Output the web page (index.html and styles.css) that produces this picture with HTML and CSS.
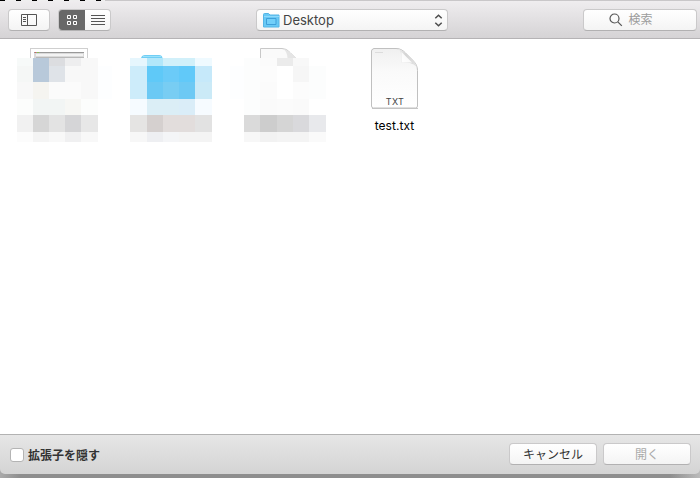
FILE: index.html
```html
<!DOCTYPE html>
<html lang="ja">
<head>
<meta charset="utf-8">
<title>Desktop</title>
<link rel="stylesheet" href="styles.css">
</head>
<body>
<div class="dialog">
  <div class="edge"></div>
  <header class="toolbar">
    <button class="btn sidebar-btn" aria-label="Sidebar"><svg width="16" height="12" viewBox="0 0 16 12" fill="none" stroke="#555"><path d="M.5 .5h15v11H.5zM6.500 .5v11M2 3.500h3M2 5.500h3M2 7.500h3"/></svg></button>
    <div class="views">
      <span class="view active"><svg width="10" height="10" viewBox="0 0 10 10" fill="none" stroke="#fff"><path d="M.5 .5h3v3h-3zM6.500 .5h3v3h-3zM.5 6.500h3v3h-3zM6.500 6.500h3v3h-3z"/></svg></span>
      <span class="view"><svg width="14" height="10" viewBox="0 0 14 10" stroke="#555"><path d="M0 .5h14M0 3.500h14M0 6.500h14M0 9.500h14"/></svg></span>
    </div>
    <div class="btn location">
      <svg width="17" height="15" viewBox="0 0 17 15"><path d="M.5 1.500Q.5.5 1.500.5h4l1.500 1.500h9v12H.5z" fill="#68c9f5" stroke="#55b4e5"/><path d="M1 3.500h15" stroke="#8fd8fb"/><path d="M3.500 5.500h9.500v6h-9.500z" fill="#72cff9" stroke="#3f9fd9"/></svg>
      <span class="name">Desktop</span>
      <svg width="9" height="13" viewBox="0 0 9 13" fill="none" stroke="#4c4c4c" stroke-width="1.500"><path d="M1.300 4.300 4.500 1.300l3.200 3M1.300 8.700l3.200 3 3.200-3"/></svg>
    </div>
    <div class="btn search"><svg width="14" height="14" viewBox="0 0 14 14" fill="none" stroke="#555" stroke-width="1.200"><circle cx="5.500" cy="5.500" r="4.500"/><path d="m8.800 8.800 4 4"/></svg><span>検索</span></div>
  </header>
  <main class="files">
    <div class="file">
      <svg width="114" height="103" viewBox="0 39 114 103" shape-rendering="crispEdges">
        <path d="M30.500 59V48.500h57V59" fill="#fff" stroke="#cfcfcf"/><path d="M34 52h50v7H34z" fill="#dadada"/><path d="M34 52.500h50" stroke="#999"/><path d="M35 52.500h1" stroke="#df6257"/><path d="M37 52.500h2" stroke="#8bbc55"/><path d="M36 55h47" stroke="#f3f3f3" stroke-width="2"/><path d="M36 57.500h48" stroke="#b8b8b8"/>
        <g><path fill="#f7faf9" d="M17 58h16v8H17z"/><path fill="#b8c9da" d="M33 58h16v24H33z"/><path fill="#dcdde0" d="M49 58h16v8H49z"/><path fill="#eeeeef" d="M65 58h16v8H65z"/><path fill="#f8f8f8" d="M81 58h17v24H81zM65 66h16v16H65z"/><path fill="#f5f7f6" d="M17 66h16v16H17z"/><path fill="#dfe3e8" d="M49 66h16v16H49z"/><path fill="#fdfeff" d="M98 66h14v33H98z"/>
        <path fill="#f8f8f8" d="M17 82h16v17H17zM81 82h17v17H81z"/><path fill="#f5f4f0" d="M33 82h16v17H33z"/><path fill="#fbfbfb" d="M49 82h32v17H49z"/><path fill="#fcfdfc" d="M17 99h16v16H17zM81 99h17v16H81z"/><path fill="#f2f5f4" d="M33 99h32v16H33z"/><path fill="#f7f7f4" d="M65 99h16v16H65z"/>
        <path fill="#f1f1f1" d="M17 115h16v17H17z"/><path fill="#d6d6d6" d="M33 115h16v17H33z"/><path fill="#e3e3e3" d="M49 115h16v17H49z"/><path fill="#d5d5d7" d="M65 115h16v17H65z"/><path fill="#e7e7e7" d="M81 115h17v17H81z"/><path fill="#fcfcfc" d="M17 132h16v10H17z"/><path fill="#f4f4f4" d="M33 132h16v10H33z"/><path fill="#f8f8f8" d="M49 132h16v10H49zM81 132h17v10H81z"/><path fill="#f0f0f1" d="M65 132h16v10H65z"/></g>
      </svg>
    </div>
    <div class="file">
      <svg width="114" height="103" viewBox="114 39 114 103">
        <path d="M141 58q1-3 4-3h14q3 0 3.500 3z" fill="#70cef5"/><path d="M143 56.500h18" stroke="#9be2fb"/>
        <g shape-rendering="crispEdges"><path fill="#e6f6fd" d="M130 58h17v8h-17z"/><path fill="#b2e7fa" d="M147 58h16v8h-16z"/><path fill="#d1f0fa" d="M163 58h32v8h-32z"/><path fill="#effaff" d="M195 58h17v8h-17z"/><path fill="#cdecfa" d="M130 66h17v33h-17z"/><path fill="#5fc9f8" d="M147 66h16v16h-16z"/><path fill="#6bcbf8" d="M163 66h16v16h-16z"/><path fill="#61c9f9" d="M179 66h16v16h-16z"/><path fill="#c6e9fa" d="M195 66h17v16h-17z"/><path fill="#6bc9f4" d="M147 82h16v17h-16z"/><path fill="#78cdf3" d="M163 82h16v17h-16z"/><path fill="#6dc9f4" d="M179 82h16v17h-16z"/><path fill="#cbeaf7" d="M195 82h17v17h-17z"/>
        <path fill="#f6fbff" d="M130 99h17v16h-17zM195 99h17v16h-17z"/><path fill="#dbeef6" d="M147 99h32v16h-32z"/><path fill="#daedf8" d="M179 99h16v16h-16z"/><path fill="#e5e4e3" d="M130 115h17v17h-17z"/><path fill="#d5d0cf" d="M147 115h16v17h-16z"/><path fill="#e2dddc" d="M163 115h32v17h-32z"/><path fill="#e2e2e2" d="M195 115h17v17h-17z"/><path fill="#f7f7f7" d="M130 132h17v10h-17z"/><path fill="#eeeff2" d="M147 132h16v10h-16z"/><path fill="#f4f5f7" d="M163 132h16v10h-16z"/><path fill="#f4f4f4" d="M179 132h33v10h-33z"/></g>
      </svg>
    </div>
    <div class="file">
      <svg width="114" height="103" viewBox="228 39 114 103">
        <path d="M260.500 59V48.500H282q5 0 8 4l6 6" fill="#fafafa" stroke="#c8c8c8"/><path d="M283 49q4 2 4.500 9h8l-6-6q-3-3-6.500-3z" fill="#e5e5e5"/>
        <g shape-rendering="crispEdges"><path fill="#fdfeff" d="M230 66h14v33h-14z"/><path fill="#fcfdfd" d="M244 58h16v57h-16zM309 66h17v33h-17z"/><path fill="#fbfbfb" d="M260 58h17v8h-17zM260 82h17v17h-17zM277 99h16v16h-16z"/><path fill="#ebebeb" d="M277 58h16v8h-16z"/><path fill="#f8f8f8" d="M293 58h16v8h-16z"/><path fill="#fcfcfc" d="M260 66h17v16h-17zM293 82h16v17h-16z"/><path fill="#fff" d="M277 66h16v33h-16z"/><path fill="#f6f6f6" d="M293 66h16v16h-16z"/><path fill="#fafafa" d="M260 99h17v16h-17zM293 99h16v16h-16z"/>
        <path fill="#dadada" d="M244 115h16v17h-16z"/><path fill="#cdcdcd" d="M260 115h17v17h-17z"/><path fill="#d5d5d5" d="M277 115h16v17h-16z"/><path fill="#d9d9dc" d="M293 115h16v17h-16z"/><path fill="#e8e9ec" d="M309 115h17v17h-17z"/><path fill="#f7f7f7" d="M244 132h16v10h-16z"/><path fill="#f2f2f2" d="M260 132h17v10h-17z"/><path fill="#f4f4f4" d="M277 132h32v10h-32z"/><path fill="#fafafa" d="M309 132h17v10h-17z"/></g>
      </svg>
    </div>
    <div class="file text-file">
      <svg width="50" height="64" viewBox="0 0 50 64">
        <defs><linearGradient id="page" x2="0" y2="1"><stop stop-color="#f0f0f0"/><stop offset=".4" stop-color="#fafafa"/><stop offset="1" stop-color="#fff"/></linearGradient><linearGradient id="fold" x1="0" y1="1" x2="1" y2="0"><stop stop-color="#fff"/><stop offset="1" stop-color="#f4f4f4"/></linearGradient><linearGradient id="shade" x2="1"><stop stop-color="#f0f0f0"/><stop offset=".4" stop-color="#d4d4d4"/><stop offset="1" stop-color="#e4e4e4"/></linearGradient></defs>
        <path d="M2 61.500h46" stroke="#000" stroke-opacity=".22"/>
        <path d="M3.500 1.500H26c4.500 0 7 2 9.500 4.500l7 7c3.500 3.500 5 6.500 5 10.500v35.500q0 2-2 2h-42q-2 0-2-2v-55q0-2 2-2z" fill="url(#page)" stroke="#c0c0c0"/>
        <path d="M28 2c3.500 2.500 3.500 7 3 13.500 7-.5 13 .5 16 5-.5-3-2-5-5-8l-7-7c-2-2-4-3-7-3.500z" fill="url(#shade)"/>
        <path d="M31.500 5V15.500h10.500z" fill="url(#fold)"/><path d="M5 5.500h8" stroke="#dcdcdc"/>
        <text class="badge-text" x="25" y="57.500" text-anchor="middle">TXT</text>
      </svg>
      <span class="caption">test.txt</span>
    </div>
  </main>
  <footer class="actions">
    <label class="option"><span class="checkbox"></span><span class="option-text">拡張子を隠す</span></label>
    <button class="btn action">キャンセル</button>
    <button class="btn action disabled">開く</button>
  </footer>
</div>
</body>
</html>
```
FILE: styles.css
```css
* { box-sizing: border-box; }
body { margin: 0; width: 700px; height: 478px; overflow: hidden; background: linear-gradient(90deg, #aaa, #8e8e8e 20px, #8e8e8e 670px, #bbb); font-family: Inter, "Noto Sans CJK JP", sans-serif; }
svg { display: block; flex: none; }
.dialog { height: 474px; display: flex; flex-direction: column; }
.edge { height: 1px; flex: none; background: linear-gradient(90deg, transparent 105px, #c9c7c9 105px), repeating-linear-gradient(90deg, #000 0 5px, #eee 5px 16px); }
.toolbar { height: 38px; flex: none; display: flex; align-items: flex-start; padding: 8px 3px 0 8px; background: linear-gradient(#efedef, #d5d3d5); border-bottom: 1px solid #b5b3b5; }
.btn { height: 22px; padding: 0; border: 1px solid #cac9ca; border-bottom-color: #b2b1b2; border-radius: 4px; background: linear-gradient(#fff, #f4f4f4); color: #444; font-family: inherit; font-size: 13px; display: flex; align-items: center; justify-content: center; }
.sidebar-btn { width: 42px; }
.views { display: flex; width: 53px; height: 22px; margin-left: 8px; border: 1px solid #cac9ca; border-bottom-color: #b2b1b2; border-radius: 4px; overflow: hidden; background: linear-gradient(#fff, #f4f4f4); }
.view { display: flex; flex: 1; align-items: center; justify-content: center; }
.view.active { background: #686868; flex: none; width: 27px; margin: -1px 0 -1px -1px; }
.location { width: 192px; margin-left: 145px; padding: 0 4px 0 6px; }
.name { flex: 1; margin-left: 3px; line-height: 20px; }
.search { width: 114px; margin-left: auto; padding-right: 18px; padding-left: 0; gap: 5px; color: #9c9c9c; font-size: 12px; }
.search span { line-height: 20px; }
.files { flex: 1; display: flex; background: #fff; }
.file { width: 114px; flex: none; }
.text-file { width: 105px; padding-top: 8px; display: flex; flex-direction: column; align-items: center; }
.badge-text { font: 9px Inter, sans-serif; letter-spacing: .4px; fill: #444; }
.caption { margin-top: 7px; font-size: 12px; line-height: 16px; color: #000; letter-spacing: .06px; }
.actions { height: 40px; flex: none; display: flex; align-items: flex-start; gap: 6px; padding: 8px 9px 0 10px; background: linear-gradient(#e6e6e6, #d4d4d4); border-top: 1px solid #b2b2b2; border-bottom-left-radius: 5px; border-bottom-right-radius: 5px; }
.option { display: flex; align-items: center; gap: 4px; height: 24px; margin-right: auto; font-size: 12px; font-weight: 600; color: #333; }
.option-text { padding-bottom: 1px; }
.checkbox { width: 14px; height: 14px; border: 1px solid #b4b4b4; border-radius: 3px; background: #fff; }
.action { width: 88px; font-size: 12px; padding-bottom: 2px; color: #333; }
.disabled { color: #aaa; }
```
